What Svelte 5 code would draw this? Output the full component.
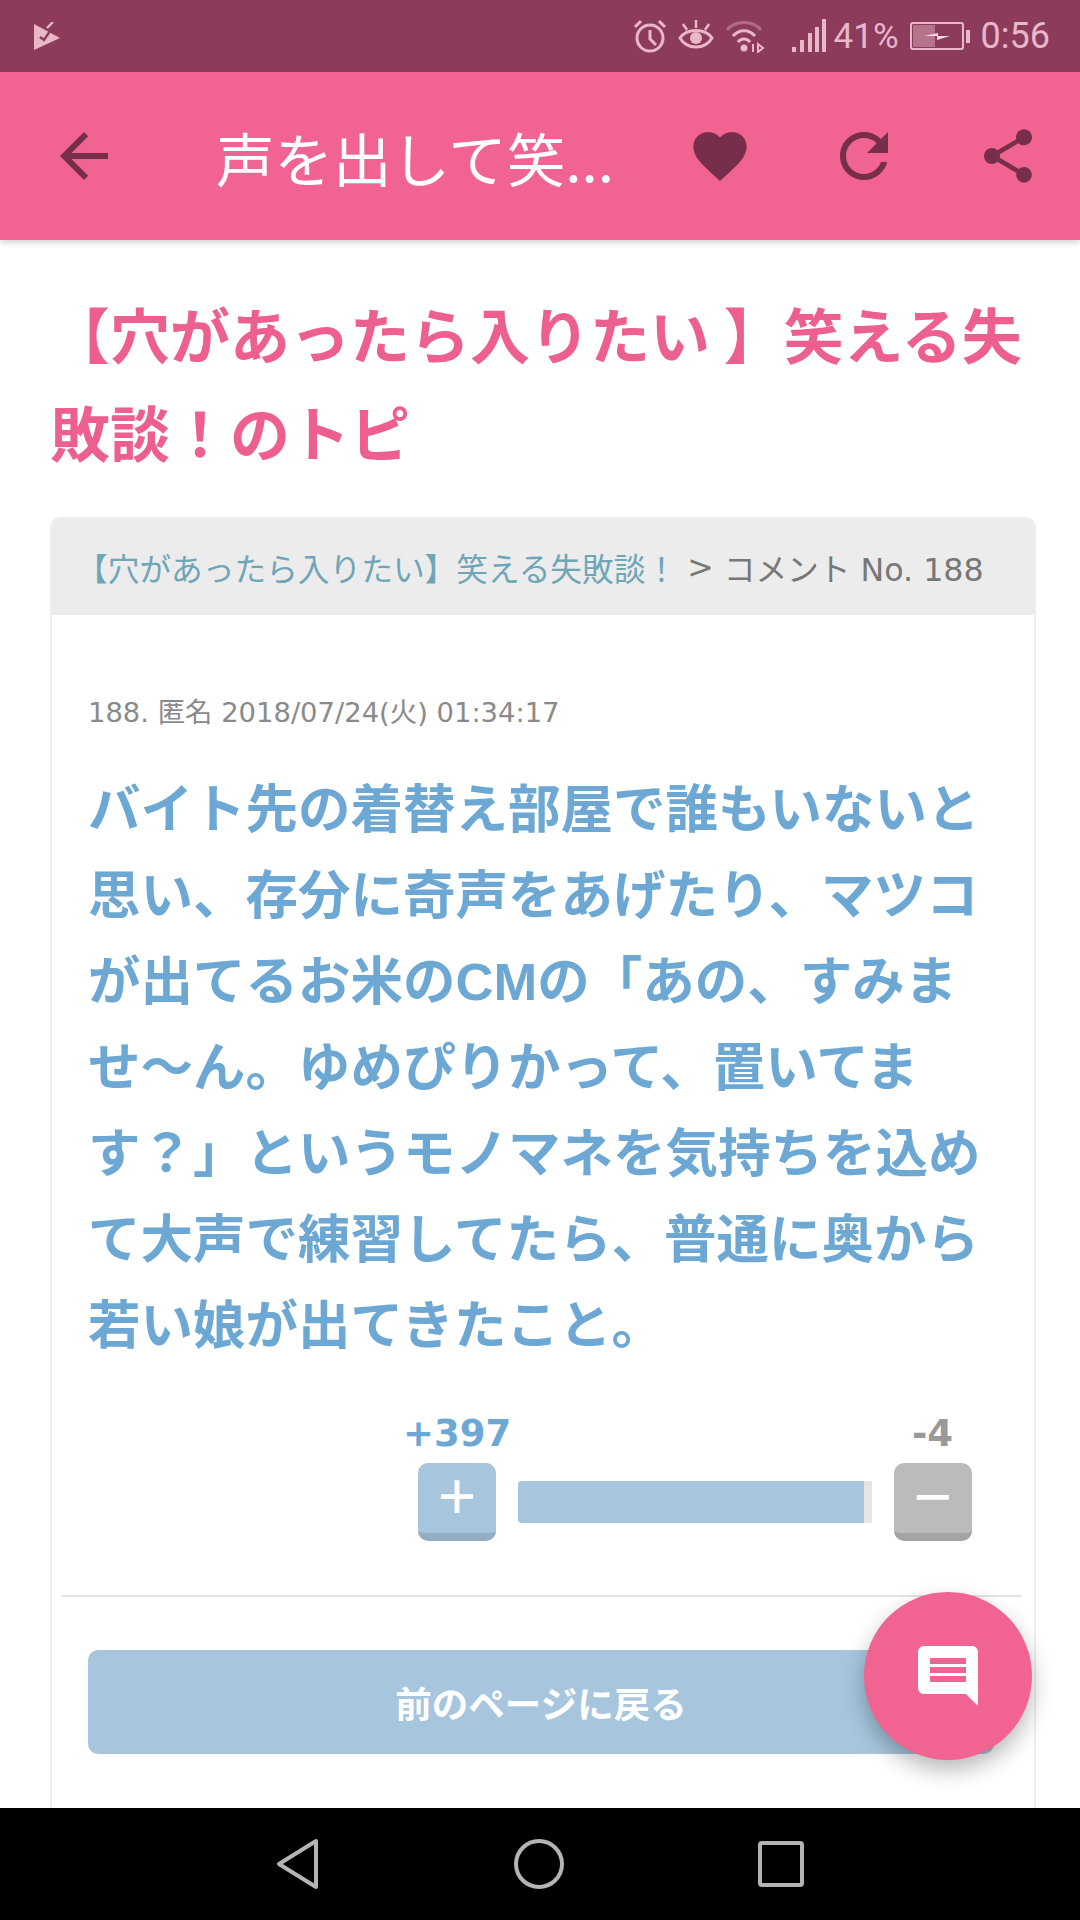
<script lang="ts">
	// Comment body, split where the screenshot wraps
	const bodyLines = [
		"バイト先の着替え部屋で誰もいないと",
		"思い、存分に奇声をあげたり、マツコ",
		"が出てるお米のCMの「あの、すみま",
		"せ〜ん。ゆめぴりかって、置いてま",
		"す？」というモノマネを気持ちを込め",
		"て大声で練習してたら、普通に奥から",
		"若い娘が出てきたこと。"
	];

	const plusVotes = 397;
	const minusVotes = 4;
	const barFill = 97.7;
</script>

<div class="screen">
	<header class="status">
		<svg class="play" viewBox="0 0 26 28" width="26" height="28">
			<path d="M0 2 L26 16 L0 28 Z" fill="#e8b7ca" />
			<path d="M6 15 l4 3 l8 -12" fill="none" stroke="#8c3c5a" stroke-width="2.4" />
			<path d="M13 6 l6 -6" fill="none" stroke="#e8b7ca" stroke-width="2.4" />
		</svg>
		<div class="status-right">
			<svg viewBox="0 0 34 34" width="34" height="34" fill="none" stroke="#e8b7ca" stroke-width="3">
				<circle cx="17" cy="19" r="13" />
				<path d="M17 11 v9 l6 6" />
				<path d="M2 8 l6 -6 M32 8 l-6 -6" />
			</svg>
			<svg viewBox="0 0 36 34" width="36" height="34" fill="none" stroke="#e8b7ca" stroke-width="3">
				<path d="M2 19 C9 9 27 9 34 19 C27 31 9 31 2 19 Z" />
				<circle cx="18" cy="19" r="6" fill="#e8b7ca" stroke="none" />
				<path d="M18 9 V1 M9 11 L5 5 M27 11 L31 5" stroke-width="2.5" />
			</svg>
			<svg viewBox="0 0 40 34" width="40" height="34" fill="none" stroke="#e8b7ca" stroke-width="3">
				<path d="M2 11 C10 1 28 1 36 11" opacity="0.4" />
				<path d="M8 17 C14 10 24 10 30 17" />
				<path d="M13 23 C16 19 22 19 25 23" />
				<circle cx="19" cy="29" r="3.5" fill="#e8b7ca" stroke="none" />
				<path d="M28 25 v8 M33 25 l5 4 l-5 4 z" stroke-width="2" />
			</svg>
			<svg class="signal" viewBox="0 0 35 34" width="35" height="34" fill="#e8b7ca">
				<rect x="0" y="28" width="4" height="5" />
				<rect x="8" y="21" width="4" height="12" />
				<rect x="16" y="14" width="4" height="19" />
				<rect x="23" y="8" width="4" height="25" />
				<rect x="30" y="0" width="4" height="33" />
			</svg>
			<span class="percent">41%</span>
			<svg viewBox="0 0 60 28" width="60" height="28" fill="none">
				<rect x="1" y="1" width="52" height="26" rx="2" stroke="#e8b7ca" stroke-width="2" />
				<rect x="3" y="3" width="22" height="22" fill="#e8b7ca" opacity="0.45" />
				<path d="M14 14 L28 11 L28 14 L40 14 L27 18 L27 14 Z" fill="#f3d6e1" />
				<rect x="56" y="8" width="4" height="13" fill="#e8b7ca" />
			</svg>
			<span class="clock">0:56</span>
		</div>
	</header>

	<nav class="appbar">
		<svg class="back" viewBox="0 0 24 24" width="72" height="72">
			<path d="M20 11H7.83l5.59-5.59L12 4l-8 8 8 8 1.41-1.41L7.83 13H20v-2z" />
		</svg>
		<h1 class="page-title">声を出して笑...</h1>
		<div class="actions">
			<svg viewBox="0 0 24 24" width="64" height="64">
				<path d="M12 21.35l-1.45-1.32C5.4 15.36 2 12.28 2 8.5 2 5.42 4.42 3 7.5 3c1.74 0 3.41.81 4.5 2.09C13.09 3.81 14.76 3 16.5 3 19.58 3 22 5.42 22 8.5c0 3.78-3.4 6.86-8.55 11.54L12 21.35z" />
			</svg>
			<svg viewBox="0 0 24 24" width="72" height="72">
				<path d="M17.65 6.35C16.2 4.9 14.21 4 12 4c-4.42 0-7.99 3.58-7.99 8s3.57 8 7.99 8c3.73 0 6.84-2.55 7.73-6h-2.08c-.82 2.33-3.04 4-5.65 4-3.31 0-6-2.69-6-6s2.69-6 6-6c1.66 0 3.14.69 4.22 1.78L13 11h7V4l-2.35 2.35z" />
			</svg>
			<svg viewBox="0 0 24 24" width="64" height="64">
				<path d="M18 16.08c-.76 0-1.44.3-1.96.77L8.91 12.7c.05-.23.09-.46.09-.7s-.04-.47-.09-.7l7.05-4.11c.54.5 1.25.81 2.04.81 1.66 0 3-1.34 3-3s-1.34-3-3-3-3 1.34-3 3c0 .24.04.47.09.7L8.04 9.81C7.5 9.31 6.79 9 6 9c-1.66 0-3 1.34-3 3s1.34 3 3 3c.79 0 1.5-.31 2.04-.81l7.12 4.16c-.05.21-.08.43-.08.65 0 1.61 1.31 2.92 2.92 2.92 1.61 0 2.92-1.31 2.92-2.92s-1.31-2.92-2.92-2.92z" />
			</svg>
		</div>
	</nav>

	<main class="content">
		<h2 class="topic">【穴があったら入りたい 】笑える失敗談！のトピ</h2>

		<section class="card">
			<div class="crumb">
				<span class="crumb-link">【穴があったら入りたい】笑える失敗談！</span>
				<span class="crumb-sep">&gt;</span>
				<span>コメント No. 188</span>
			</div>
			<div class="comment">
				<p class="meta">188. 匿名 2018/07/24(火) 01:34:17</p>
				<p class="body">
					{#each bodyLines as line}
						<span>{line}</span>
					{/each}
				</p>
				<div class="votes">
					<div class="counts">
						<span class="plus-count">+{plusVotes}</span>
						<span class="minus-count">-{minusVotes}</span>
					</div>
					<div class="vote-row">
						<div class="vote-btn plus">+</div>
						<div class="bar"><div class="bar-fill" style="width: {barFill}%"></div></div>
						<div class="vote-btn minus">−</div>
					</div>
				</div>
			</div>
			<hr class="divider" />
			<div class="back-btn">前のページに戻る</div>
		</section>
	</main>

	<footer class="navbar">
		<svg viewBox="0 0 44 52" width="44" height="52" fill="none" stroke="#b4b4b4" stroke-width="4" stroke-linejoin="round">
			<path d="M40 3 L3 26 L40 49 Z" />
		</svg>
		<svg viewBox="0 0 52 52" width="52" height="52" fill="none" stroke="#b4b4b4" stroke-width="4">
			<circle cx="26" cy="26" r="23" />
		</svg>
		<svg viewBox="0 0 46 46" width="46" height="46" fill="none" stroke="#b4b4b4" stroke-width="4" stroke-linejoin="round">
			<rect x="2" y="2" width="42" height="42" rx="2" />
		</svg>
	</footer>

	<button class="fab" aria-label="コメント">
		<svg viewBox="0 0 24 24" width="72" height="72">
			<path d="M21.99 4c0-1.1-.89-2-1.99-2H4c-1.1 0-2 .9-2 2v12c0 1.1.9 2 2 2h14l4 4-.01-18zM18 14H6v-2h12v2zm0-3H6V9h12v2zm0-3H6V6h12v2z" />
		</svg>
	</button>
</div>

<style>
	:global(body) {
		margin: 0;
		background: #fff;
	}

	.screen {
		position: relative;
		width: 1080px;
		height: 1920px;
		display: flex;
		flex-direction: column;
		overflow: hidden;
		font-family: "Noto Sans CJK JP", "Noto Sans", sans-serif;
	}

	.status {
		height: 72px;
		flex: none;
		background: #8c3c5a;
		display: flex;
		align-items: center;
		justify-content: space-between;
		padding: 0 30px 0 34px;
		box-sizing: border-box;
		color: #e8b7ca;
		font-family: Roboto, sans-serif;
	}

	.status-right {
		display: flex;
		align-items: center;
		gap: 11px;
	}

	.signal {
		margin-left: 16px;
	}

	.percent {
		font-size: 35px;
		margin-left: -4px;
	}

	.clock {
		font-size: 36px;
	}

	.appbar {
		height: 168px;
		flex: none;
		background: #f16391;
		display: flex;
		align-items: center;
		padding: 0 40px 0 48px;
		box-sizing: border-box;
		box-shadow: 0 3px 6px rgba(0, 0, 0, 0.16);
		z-index: 1;
	}

	.appbar svg {
		fill: #762e4a;
		flex: none;
	}

	.page-title {
		margin: 0 0 0 96px;
		font-size: 58.5px;
		font-weight: 400;
		color: #fff;
		white-space: nowrap;
		flex: 1;
	}

	.actions {
		display: flex;
		align-items: center;
		gap: 76px;
	}

	.content {
		flex: 1;
		min-height: 0;
		overflow: hidden;
		padding: 44px 44px 0 50px;
	}

	.topic {
		margin: 0 0 37px;
		font-size: 60px;
		line-height: 98px;
		font-weight: 700;
		color: #ec5f8e;
		width: 980px;
	}

	.card {
		border: 2px solid #eeeeee;
		border-radius: 10px;
		height: 1400px;
		box-sizing: border-box;
	}

	.crumb {
		height: 96px;
		background: #ececec;
		border-radius: 8px 8px 0 0;
		display: flex;
		align-items: center;
		gap: 10px;
		padding: 0 0 0 24px;
		font-family: "DejaVu Sans", "Noto Sans CJK JP", sans-serif;
		font-size: 31.7px;
		color: #777;
		white-space: nowrap;
	}

	.crumb-link {
		color: #6ea6b8;
	}

	.comment {
		padding: 78px 36px 0 36px;
	}

	.meta {
		margin: 0 0 34px;
		font-family: "DejaVu Sans", "Noto Sans CJK JP", sans-serif;
		font-size: 27.4px;
		line-height: 40px;
		color: #8a8a8a;
	}

	.body {
		margin: 0;
		font-family: "Liberation Sans", "Noto Sans CJK JP", sans-serif;
		font-size: 52.5px;
		line-height: 86px;
		font-weight: 700;
		color: #6ca8d3;
		white-space: nowrap;
	}

	.body span {
		display: block;
	}

	.votes {
		margin-top: 43px;
		width: 554px;
		margin-left: auto;
		margin-right: 26px;
	}

	.counts {
		display: flex;
		justify-content: space-between;
		font-family: "DejaVu Sans", sans-serif;
		font-size: 37px;
		line-height: 44px;
		font-weight: 700;
		padding: 0 19px 0 0;
		margin-left: -15px;
	}

	.plus-count {
		color: #6ca8d3;
	}

	.minus-count {
		color: #999;
	}

	.vote-row {
		display: flex;
		align-items: center;
		gap: 22px;
		margin-top: 7px;
	}

	.vote-btn {
		width: 78px;
		height: 78px;
		flex: none;
		border-radius: 10px;
		color: #fff;
		font-size: 66px;
		line-height: 66px;
		text-align: center;
		box-sizing: border-box;
		font-family: "Liberation Sans", sans-serif;
	}

	.plus {
		background: #a7c6de;
		border-bottom: 8px solid #93adc2;
	}

	.minus {
		background: #bbbbbb;
		border-bottom: 8px solid #a4a4a4;
	}

	.bar {
		flex: 1;
		height: 42px;
		background: #e5e5e5;
		border-radius: 4px 0 0 4px;
		overflow: hidden;
	}

	.bar-fill {
		height: 100%;
		background: #a7c6de;
	}

	.divider {
		border: 0;
		height: 2px;
		background: #e4e4e4;
		margin: 54px 12px 0 10px;
	}

	.back-btn {
		margin: 53px 40px 0 36px;
		height: 104px;
		border-radius: 10px;
		background: #a7c6de;
		color: #fff;
		font-size: 36.5px;
		font-weight: 700;
		display: flex;
		align-items: center;
		justify-content: center;
	}

	.navbar {
		height: 112px;
		flex: none;
		background: #000;
		display: flex;
		align-items: center;
		justify-content: center;
		gap: 193px;
		z-index: 1;
	}

	.fab {
		position: absolute;
		left: 864px;
		top: 1592px;
		width: 168px;
		height: 168px;
		border: 0;
		padding: 0;
		border-radius: 50%;
		background: #f16391;
		box-shadow: 0 10px 22px rgba(0, 0, 0, 0.28);
		display: flex;
		align-items: center;
		justify-content: center;
	}

	.fab svg {
		fill: #fff;
	}
</style>
